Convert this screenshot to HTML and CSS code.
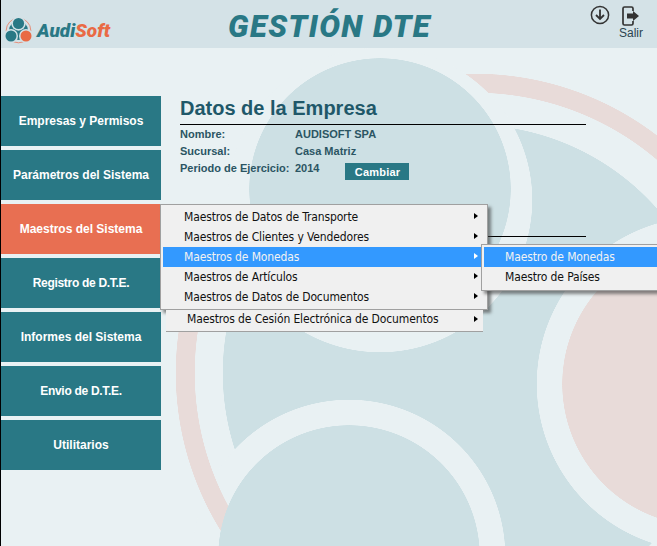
FILE: index.html
```html
<!DOCTYPE html>
<html lang="es">
<head>
  <meta charset="UTF-8" />
  <title>Gestión DTE</title>
  <link rel="stylesheet" href="styles.css">
</head>
<body>
  <header class="topbar">
    <div class="logo">
      <svg class="logo-mark" width="28" height="28" viewBox="0 0 28 28">
        <circle cx="13.5" cy="14.5" r="12.3" fill="none" stroke="#e8836b" stroke-width="0.9"/>
        <circle cx="13.5" cy="14.5" r="9.5" fill="#297885"/>
        <circle cx="13.5" cy="7.5" r="7.2" fill="#d4e2e7"/>
        <circle cx="6" cy="20" r="7" fill="#d4e2e7"/>
        <circle cx="21" cy="20" r="7" fill="#d4e2e7"/>
        <circle cx="13.5" cy="7.5" r="5.6" fill="#297885"/>
        <circle cx="6" cy="20" r="5.5" fill="#297885"/>
        <circle cx="21" cy="20" r="5.5" fill="#e96a45"/>
      </svg>
      <span class="logo-name">Audi<span class="logo-soft">Soft</span></span>
    </div>
    <div class="app-title">GESTIÓN DTE</div>
    <div class="top-actions">
      <svg class="icon-down" width="20" height="20" viewBox="0 0 20 20" fill="none" stroke="#333" stroke-width="1.5">
        <circle cx="10" cy="10" r="8.6"/>
        <path d="M10 4.500v9.500M6 10 10 14l4-4" stroke-width="1.8"/>
      </svg>
      <div class="exit">
        <svg width="18" height="20" viewBox="0 0 18 20">
          <path d="M11 5V2.500a1.500 1.500 0 0 0-1.500-1.500H2.500A1.500 1.500 0 0 0 1 2.500v15A1.500 1.500 0 0 0 2.500 19h7a1.500 1.500 0 0 0 1.500-1.500V15" fill="none" stroke="#333" stroke-width="1.7"/>
          <path d="M5 7.500h6V5l6 5-6 5v-2.500H5z" fill="#333"/>
        </svg>
        <span>Salir</span>
      </div>
    </div>
  </header>

  <div class="page">
    <nav class="sidebar">
      <a class="nav-btn">Empresas y Permisos</a>
      <a class="nav-btn">Parámetros del Sistema</a>
      <a class="nav-btn active">Maestros del Sistema</a>
      <a class="nav-btn nav-tight">Registro de D.T.E.</a>
      <a class="nav-btn">Informes del Sistema</a>
      <a class="nav-btn nav-tight">Envio de D.T.E.</a>
      <a class="nav-btn">Utilitarios</a>
    </nav>

    <main class="content">
      <h1>Datos de la Empresa</h1>
      <div class="info-row"><span class="info-label">Nombre:</span><span>AUDISOFT SPA</span></div>
      <div class="info-row"><span class="info-label">Sucursal:</span><span>Casa Matriz</span></div>
      <div class="info-row">
        <span class="info-label">Periodo de Ejercicio:</span><span>2014</span>
        <button class="change-btn">Cambiar</button>
      </div>
      <div class="section-rule"></div>
    </main>
  </div>

  <div class="menu-wrap">
    <div class="menu">
      <div class="menu-item">Maestros de Datos de Transporte<i class="arrow"></i></div>
      <div class="menu-item">Maestros de Clientes y Vendedores<i class="arrow"></i></div>
      <div class="menu-item selected">Maestros de Monedas<i class="arrow"></i></div>
      <div class="menu-item">Maestros de Artículos<i class="arrow"></i></div>
      <div class="menu-item">Maestros de Datos de Documentos<i class="arrow"></i></div>
      <div class="submenu">
        <div class="menu-item selected">Maestro de Monedas</div>
        <div class="menu-item">Maestro de Países</div>
      </div>
    </div>
    <div class="menu-last">Maestros de Cesión Electrónica de Documentos<i class="arrow"></i></div>
  </div>
</body>
</html>
```

FILE: styles.css
```css
:root {
  --teal: #297885;
  --orange: #e86f52;
  --head-bg: #d4e2e7;
  --page-bg: #e9f1f3;
  --wm-teal: #cde0e4;
  --wm-pink: #e8dbd9;
  --ink: #2b5563;
}

html, body {
  height: 100%;
}

/* the big watermark is the logo blown up, drawn as layered circles */
body {
  margin: 0;
  overflow: hidden;
  border-left: 1px solid #000;
  font-family: "Liberation Sans", Arial, sans-serif;
  background-color: var(--page-bg);
  background-origin: border-box;
  background-image:
    radial-gradient(circle at 380px 189px, var(--wm-teal) 130.5px, transparent 131px),
    radial-gradient(circle at 349px 556px, var(--wm-teal) 130.5px, transparent 131px),
    radial-gradient(circle at 704px 384px, var(--wm-pink) 141.5px, transparent 142px),
    radial-gradient(circle at 380px 200px, var(--page-bg) 152px, transparent 152.5px),
    radial-gradient(circle at 704px 384px, var(--page-bg) 167px, transparent 167.5px),
    radial-gradient(circle at 475px 373px, transparent 280px, var(--wm-pink) 280.5px, var(--wm-pink) 299px, transparent 299.5px),
    radial-gradient(circle at 349px 556px, var(--page-bg) 156px, transparent 156.5px),
    radial-gradient(circle at 471px 373px, var(--wm-teal) 248px, transparent 248.5px);
}

.topbar {
  height: 48px;
  background: var(--head-bg);
  display: flex;
  align-items: flex-start;
}

.logo {
  width: 227px;
  padding: 16px 0 0 4px;
  box-sizing: border-box;
  display: flex;
  align-items: center;
  gap: 4px;
}

.logo-name {
  font-family: Roboto, "Liberation Sans", sans-serif;
  font-size: 19px;
  font-weight: 900;
  font-style: italic;
  color: var(--teal);
}

.logo-soft {
  color: #e96a45;
}

.app-title {
  width: 362px;
  padding-top: 8px;
  font-family: Roboto, "Liberation Sans", sans-serif;
  font-size: 31px;
  font-weight: 900;
  font-style: italic;
  letter-spacing: 1.4px;
  color: var(--teal);
}

.top-actions {
  display: flex;
  gap: 9px;
  padding-top: 5px;
}

.icon-down {
  flex: none;
}

.exit {
  display: flex;
  flex-direction: column;
  align-items: center;
  padding-top: 1px;
  font-size: 12px;
  line-height: 15px;
  color: #2b4450;
}

.page {
  display: flex;
}

.sidebar {
  width: 160px;
  padding-top: 48px;
  display: flex;
  flex-direction: column;
  gap: 4px;
}

.nav-btn {
  height: 50px;
  background: var(--teal);
  color: #fff;
  font-size: 12px;
  font-weight: 700;
  display: flex;
  align-items: center;
  justify-content: center;
}

.nav-btn.active {
  background: var(--orange);
}

.nav-tight {
  letter-spacing: -0.3px;
}

.content {
  margin-left: 19px;
  width: 406px;
  padding-top: 48px;
  font-size: 11px;
  font-weight: 700;
  color: var(--ink);
}

h1 {
  margin: 0 0 1px;
  height: 28px;
  line-height: 25px;
  font-size: 20px;
  color: #1f5869;
  border-bottom: 1px solid #000;
}

.info-row {
  height: 17px;
  line-height: 17px;
  display: flex;
}

.info-label {
  width: 115px;
}

.change-btn {
  margin: 3px 0 0 26px;
  width: 64px;
  height: 17px;
  padding: 0;
  border: none;
  background: var(--teal);
  color: #fff;
  font: 700 11px "Liberation Sans", Arial, sans-serif;
  letter-spacing: 0.2px;
}

.section-rule {
  margin-top: 59px;
  border-top: 1px solid #000;
}

.menu-wrap {
  position: absolute;
  left: 160px;
  top: 204px;
  font-family: "DejaVu Sans", sans-serif;
  font-stretch: condensed;
  font-size: 12px;
  letter-spacing: -0.13px;
  color: #111;
}

.menu {
  position: relative;
  box-sizing: border-box;
  width: 328px;
  height: 106px;
  padding: 2px;
  background: #f0f0f0;
  border: 1px solid #a0a0a0;
  box-shadow: 3px 3px 3px rgba(60, 60, 60, 0.6);
}

.menu-item {
  position: relative;
  height: 20px;
  line-height: 20px;
  padding-left: 21px;
}

.menu-item.selected {
  background: #3399ff;
  color: #f2f2f2;
}

.arrow {
  position: absolute;
  right: 7px;
  top: 6px;
  border-left: 4px solid #000;
  border-top: 3.500px solid transparent;
  border-bottom: 3.500px solid transparent;
}

.selected .arrow {
  border-left-color: #fff;
}

.submenu {
  position: absolute;
  left: 320px;
  top: 39px;
  box-sizing: border-box;
  width: 190px;
  height: 47px;
  padding: 2px;
  background: #f0f0f0;
  border: 1px solid #a0a0a0;
  box-shadow: 3px 3px 3px rgba(60, 60, 60, 0.6);
}

.menu-last {
  position: relative;
  box-sizing: border-box;
  margin-left: 6px;
  width: 317px;
  height: 22px;
  line-height: 19px;
  padding-left: 21px;
  background: #f0f0f0;
  border-bottom: 1px solid #a0a0a0;
}

.menu-last .arrow {
  right: 5px;
}
```
